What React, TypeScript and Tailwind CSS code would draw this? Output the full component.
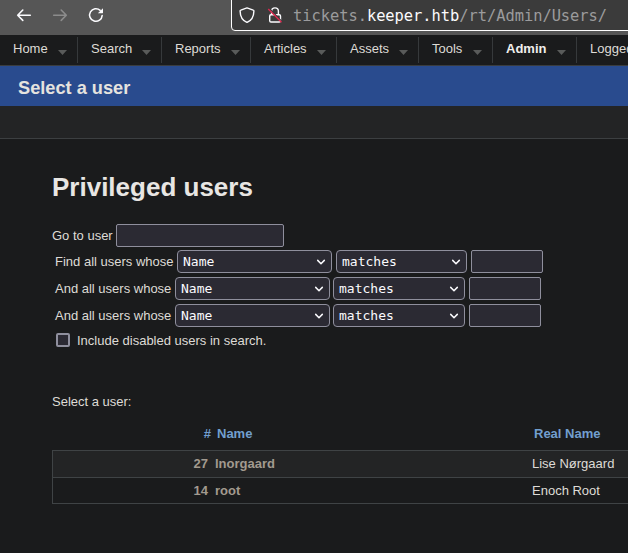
import React from "react";

const tabs = [
  { label: "Home", width: "w-[78px]" },
  { label: "Search", width: "w-[84px]" },
  { label: "Reports", width: "w-[89px]" },
  { label: "Articles", width: "w-[86px]" },
  { label: "Assets", width: "w-[82px]" },
  { label: "Tools", width: "w-[74px]" },
  { label: "Admin", width: "w-[84px]", active: true },
];

const rows = [
  { id: 27, name: "lnorgaard", real: "Lise Nørgaard", style: "h-[27px] bg-[#232425]" },
  { id: 14, name: "root", real: "Enoch Root", style: "h-[26px]" },
];

function BrowserBar() {
  return (
    <div className="flex h-[35px] shrink-0 items-start bg-[#565656]">
      <svg className="ml-[16px] mt-[7px] shrink-0" width="16" height="16" viewBox="0 0 16 16" fill="none" stroke="#fbfbfe" strokeWidth="1.6" strokeLinecap="round" strokeLinejoin="round">
        <path d="M14.3 8.2H1.7M6.8 3 1.7 8.2l5.1 5.2" />
      </svg>
      <svg className="ml-[20px] mt-[7px] shrink-0" width="16" height="16" viewBox="0 0 16 16" fill="none" stroke="#8c8c8c" strokeWidth="1.6" strokeLinecap="round" strokeLinejoin="round">
        <path d="M1.7 8.2h12.6M9.2 3l5.1 5.2-5.1 5.2" />
      </svg>
      <svg className="ml-[20px] mt-[7px] shrink-0" width="16" height="16" viewBox="0 0 16 16" fill="none">
        <path d="M12.2 3.4A6.3 6.3 0 1 0 14.2 8.4" stroke="#fbfbfe" strokeWidth="1.5" strokeLinecap="round" />
        <path d="M15 1.2v4.6c0 .3-.2.5-.5.5H9.9Z" fill="#fbfbfe" />
      </svg>
      <div className="-mt-[4px] ml-[127px] flex h-[35px] w-[410px] shrink-0 items-start rounded-[4px] border border-white bg-[#3b3b3b]">
        <svg className="ml-[7px] mt-[10px] shrink-0" width="16" height="16" viewBox="0 0 16 16" fill="none" stroke="#fbfbfe" strokeWidth="1.4" strokeLinejoin="round">
          <path d="M8 .9 14.2 3.1c.4.1.7.5.7.9C14.8 9.6 12.6 13.6 8 15.4 3.4 13.6 1.2 9.6 1.1 4c0-.4.3-.8.7-.9Z" />
        </svg>
        <svg className="ml-[12px] mt-[10px] shrink-0" width="16" height="16" viewBox="0 0 16 16" fill="none">
          <path d="M4.6 7.7V4.3a3.4 3.4 0 0 1 6.8 0v3.4" stroke="#fbfbfe" strokeWidth="1.4" />
          <rect x="2.7" y="7.7" width="10.8" height="7.3" rx="1.3" stroke="#fbfbfe" strokeWidth="1.4" />
          <path d="m2.3 1.5 12.6 12.8" stroke="#3b3b3b" strokeWidth="1.2" />
          <path d="m1.3 2 13.2 13.3" stroke="#e22850" strokeWidth="1.3" />
        </svg>
        <div className="ml-[10px] mt-[8px] whitespace-pre font-['DejaVu_Sans_Mono',monospace] text-[15.4px] leading-[22px] tracking-[-0.03px] text-[#9b9b9d]">
          tickets.<span className="text-[#fbfbfe]">keeper.htb</span>/rt/Admin/Users/
        </div>
      </div>
    </div>
  );
}

function Select({ value, className }: { value: string; className: string }) {
  return (
    <div className={`flex h-[23px] shrink-0 items-center justify-between rounded-[4px] border border-[#8f8f9d] bg-[#2b2a33] pl-[5px] pr-[5px] font-['DejaVu_Sans_Mono',monospace] text-[13px] leading-[20px] text-[#fbfbfe] ${className}`}>
      <span>{value}</span>
      <svg width="10" height="10" viewBox="0 0 10 10" fill="none" stroke="#fbfbfe" strokeWidth="1.5" strokeLinecap="round" strokeLinejoin="round">
        <path d="m1.7 3.4 3.3 3.3 3.3-3.3" />
      </svg>
    </div>
  );
}

function Field({ className }: { className: string }) {
  return <input className={`h-[23px] shrink-0 rounded-[2px] border border-[#8f8f9d] bg-[#2b2a33] outline-none ${className}`} />;
}

function Criterion({ first }: { first?: boolean }) {
  return (
    <div className="flex h-[23px] items-center pl-[3px]">
      <span className={`shrink-0 ${first ? "w-[122px]" : "w-[120px]"}`}>{first ? "Find" : "And"} all users whose</span>
      <Select value="Name" className="w-[155px]" />
      <Select value="matches" className={first ? "ml-[4px] w-[131px]" : "ml-[3px] w-[132px]"} />
      <Field className="ml-[4px] w-[72px]" />
    </div>
  );
}

export default function App() {
  return (
    <div className="flex h-[553px] w-[628px] flex-col overflow-hidden whitespace-nowrap bg-[#1a1b1c] font-['Liberation_Sans',Arial,sans-serif] text-[13px] leading-[16px] text-[#dedbd6]">
      <BrowserBar />
      <nav className="flex h-[31px] shrink-0 items-start border-b border-[#3a3d3f] pt-[2px]">
        {tabs.map((t) => (
          <div key={t.label} className={`flex h-[26px] shrink-0 justify-between border-r border-[#36393b] pl-[13px] pr-[10px] ${t.width}`}>
            <span className={`mt-[4px] ${t.active ? "font-bold text-[#f0efed]" : ""}`}>{t.label}</span>
            <svg className="mt-[13px]" width="9" height="5" viewBox="0 0 9 5" fill="#595b5a">
              <path d="M0 0h9L4.5 5Z" />
            </svg>
          </div>
        ))}
        <span className="ml-[13px] mt-[4px]">Logged in as root</span>
      </nav>
      <header className="flex h-[40px] shrink-0 items-center bg-[#294b8e] pl-[18px] pt-[3px]">
        <h1 className="text-[18.2px] font-bold leading-[24px] text-[#e5e3df]">Select a user</h1>
      </header>
      <div className="h-[33px] shrink-0 border-b border-[#3c3f41] bg-[#232425]" />
      <main className="flex flex-col pl-[52px]">
        <h2 className="mt-[32px] text-[26px] font-bold leading-[32px] text-[#e8e6e3]">Privileged users</h2>
        <div className="mt-[21px] flex h-[23px] items-center">
          <span className="w-[64px] shrink-0">Go to user</span>
          <Field className="w-[168px]" />
        </div>
        <div className="mt-[3px] flex flex-col gap-[4px]">
          <Criterion first />
          <Criterion />
          <Criterion />
        </div>
        <label className="mt-[6px] flex h-[16px] items-start pl-[4px]">
          <span className="mr-[7px] h-[14px] w-[14px] shrink-0 rounded-[2px] border-2 border-[#8f8f9d] bg-[#2b2a33]" />
          <span>Include disabled users in search.</span>
        </label>
        <p className="mt-[45px]">Select a user:</p>
        <div className="mt-[16px] flex h-[16px] font-bold text-[#729fcf]">
          <span className="w-[159px] text-right">#</span>
          <span className="ml-[6px] w-[317px]">Name</span>
          <span>Real Name</span>
        </div>
        <div className="mt-[8px] border-l border-t border-[#3f4345]">
          {rows.map((r) => (
            <div key={r.id} className={`flex items-center border-b border-[#3f4345] ${r.style}`}>
              <span className="w-[155px] text-right font-bold text-[#a29a8f]">{r.id}</span>
              <span className="ml-[7px] w-[317px] font-bold text-[#a29a8f]">{r.name}</span>
              <span>{r.real}</span>
            </div>
          ))}
        </div>
      </main>
    </div>
  );
}
